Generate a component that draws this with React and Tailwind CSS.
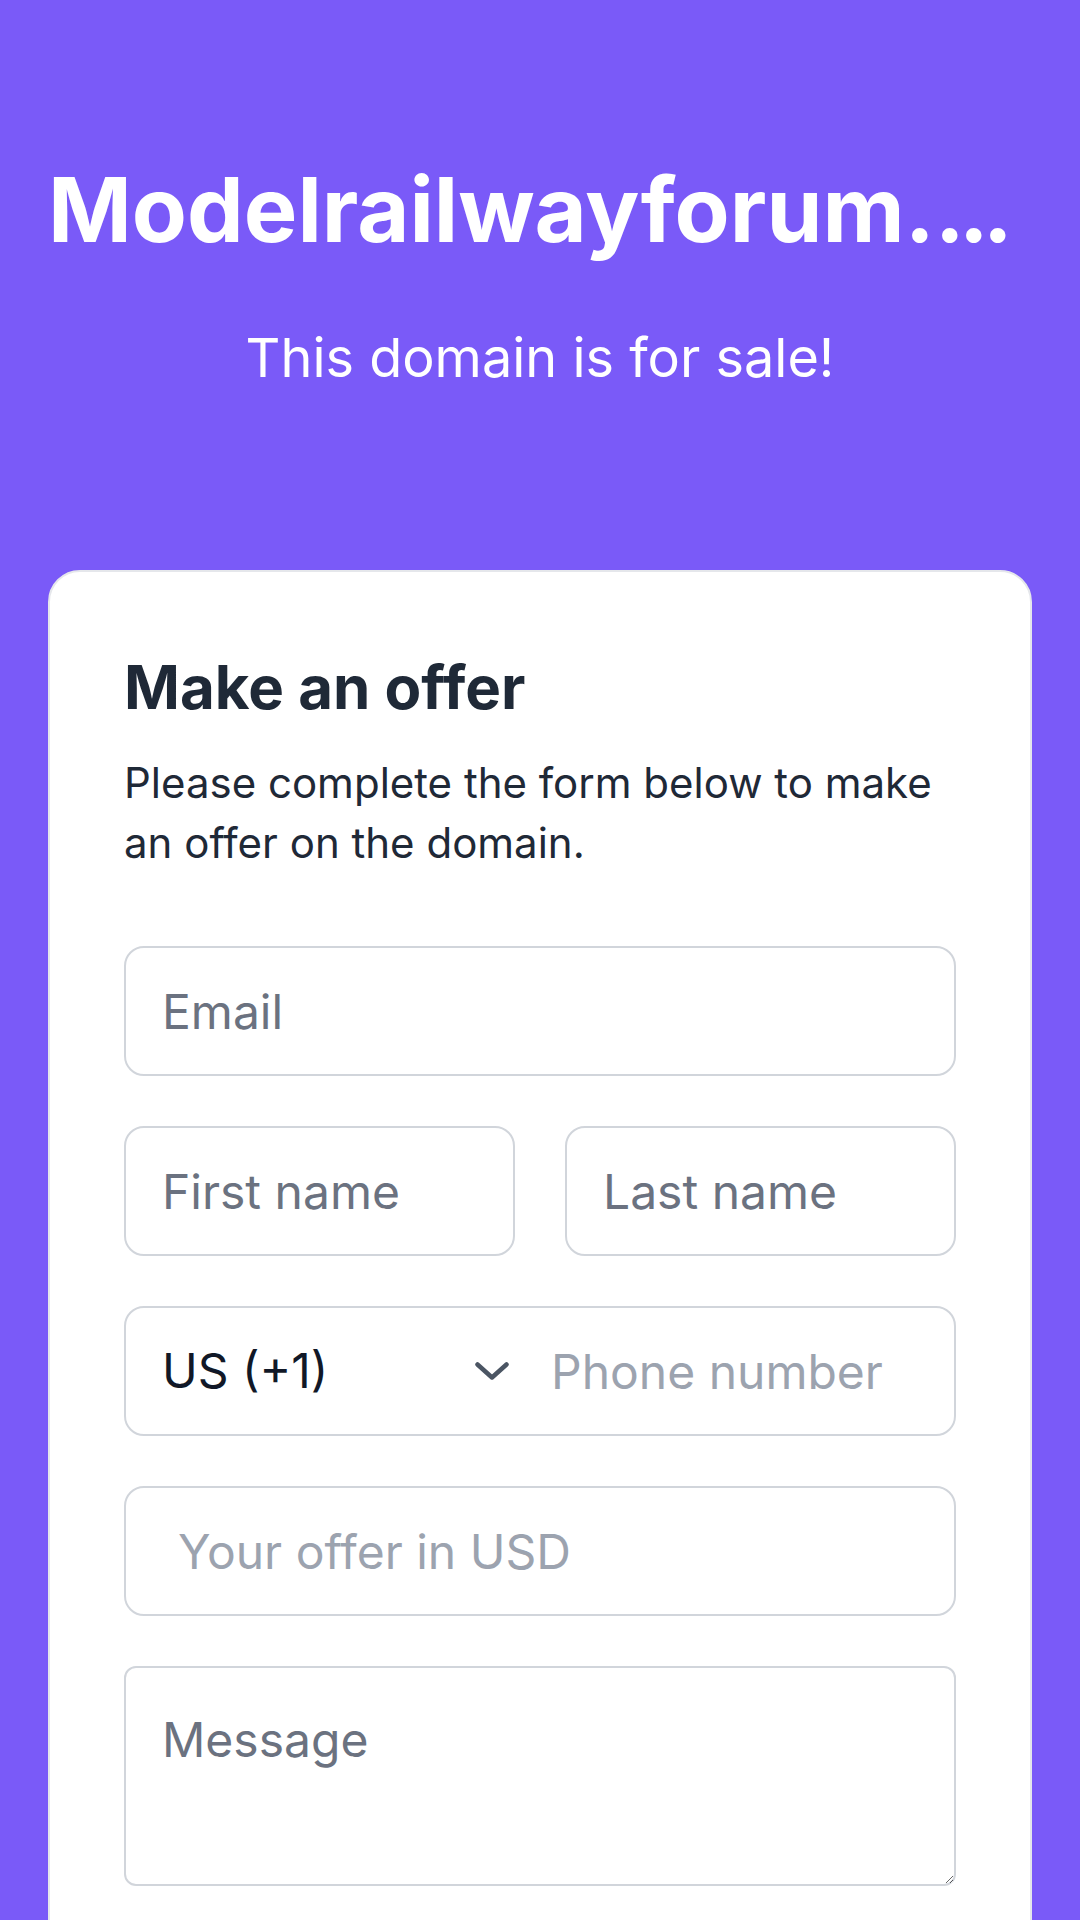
import { useState } from "react";

const inputBox = "w-full h-[130px] border-2 border-[#d1d5db] rounded-[20px] bg-white text-[48px] text-[#111827] outline-none"

const App = () => {
    const [country, setCountry] = useState('US (+1)')

    return <div className="min-h-screen bg-[#7a5af8] font-['Inter',sans-serif] overflow-hidden">
        <div className="pt-[155px] px-[48px] text-white text-center">
            <h1 className="text-[90px] font-bold leading-[110px] whitespace-nowrap overflow-hidden text-left" title="Modelrailwayforum.com">
                Modelrailwayforum.<span className="tracking-[-6px]">...</span>
            </h1>
            <p className="mt-[53px] text-[54px] leading-[80px]">This domain is for sale!</p>
        </div>

        <div className="mt-[172px] mx-[48px] bg-white border-2 border-[#e5e7eb] rounded-[32px] px-[74px] pt-[79px] pb-[80px]">
            <h2 className="text-[60px] leading-[72px] font-bold text-[#1f2937]">Make an offer</h2>
            <p className="mt-[30px] text-[42px] leading-[60px] text-[#1f2937]">
                Please complete the form below to make an offer on the domain.
            </p>

            <form className="mt-[73px] flex flex-col gap-[50px]" onSubmit={(e) => e.preventDefault()}>
                <input type="email" placeholder="Email"
                    className={`${inputBox} px-[36px] placeholder:text-[#6b7280]`} />

                <div className="flex gap-[50px]">
                    <input type="text" placeholder="First name"
                        className={`${inputBox} min-w-0 px-[36px] placeholder:text-[#6b7280]`} />
                    <input type="text" placeholder="Last name"
                        className={`${inputBox} min-w-0 px-[36px] placeholder:text-[#6b7280]`} />
                </div>

                <div className="flex items-center h-[130px] border-2 border-[#d1d5db] rounded-[20px] bg-white">
                    <label className="relative flex items-center justify-between w-[388px] h-full pl-[36px] pr-[5px] cursor-pointer">
                        <span className="text-[48px] text-[#111827]">{country}</span>
                        <svg width="34" height="18" viewBox="0 0 34 18" fill="none">
                            <path d="M2.5 2.5 L17 15.5 L31.5 2.5" stroke="#4b5563" strokeWidth="4.5" strokeLinecap="round" strokeLinejoin="round" />
                        </svg>
                        <select value={country} onChange={(e) => setCountry(e.target.value)}
                            className="absolute inset-0 opacity-0 cursor-pointer">
                            <option>US (+1)</option>
                            <option>UK (+44)</option>
                            <option>DE (+49)</option>
                        </select>
                    </label>
                    <input type="tel" placeholder="Phone number"
                        className="flex-1 min-w-0 h-full pl-[37px] pr-[16px] bg-transparent text-[48px] text-[#111827] outline-none rounded-r-[20px] placeholder:text-[#9ca3af]" />
                </div>

                <input type="text" placeholder="Your offer in USD"
                    className={`${inputBox} pl-[52px] pr-[36px] placeholder:text-[#9ca3af]`} />

                <textarea placeholder="Message"
                    className="w-full h-[220px] border-2 border-[#d1d5db] rounded-[12px] bg-white px-[36px] pt-[36px] text-[48px] leading-[1.5] text-[#111827] outline-none placeholder:text-[#6b7280]" />
            </form>
        </div>
    </div>
}

export default App
